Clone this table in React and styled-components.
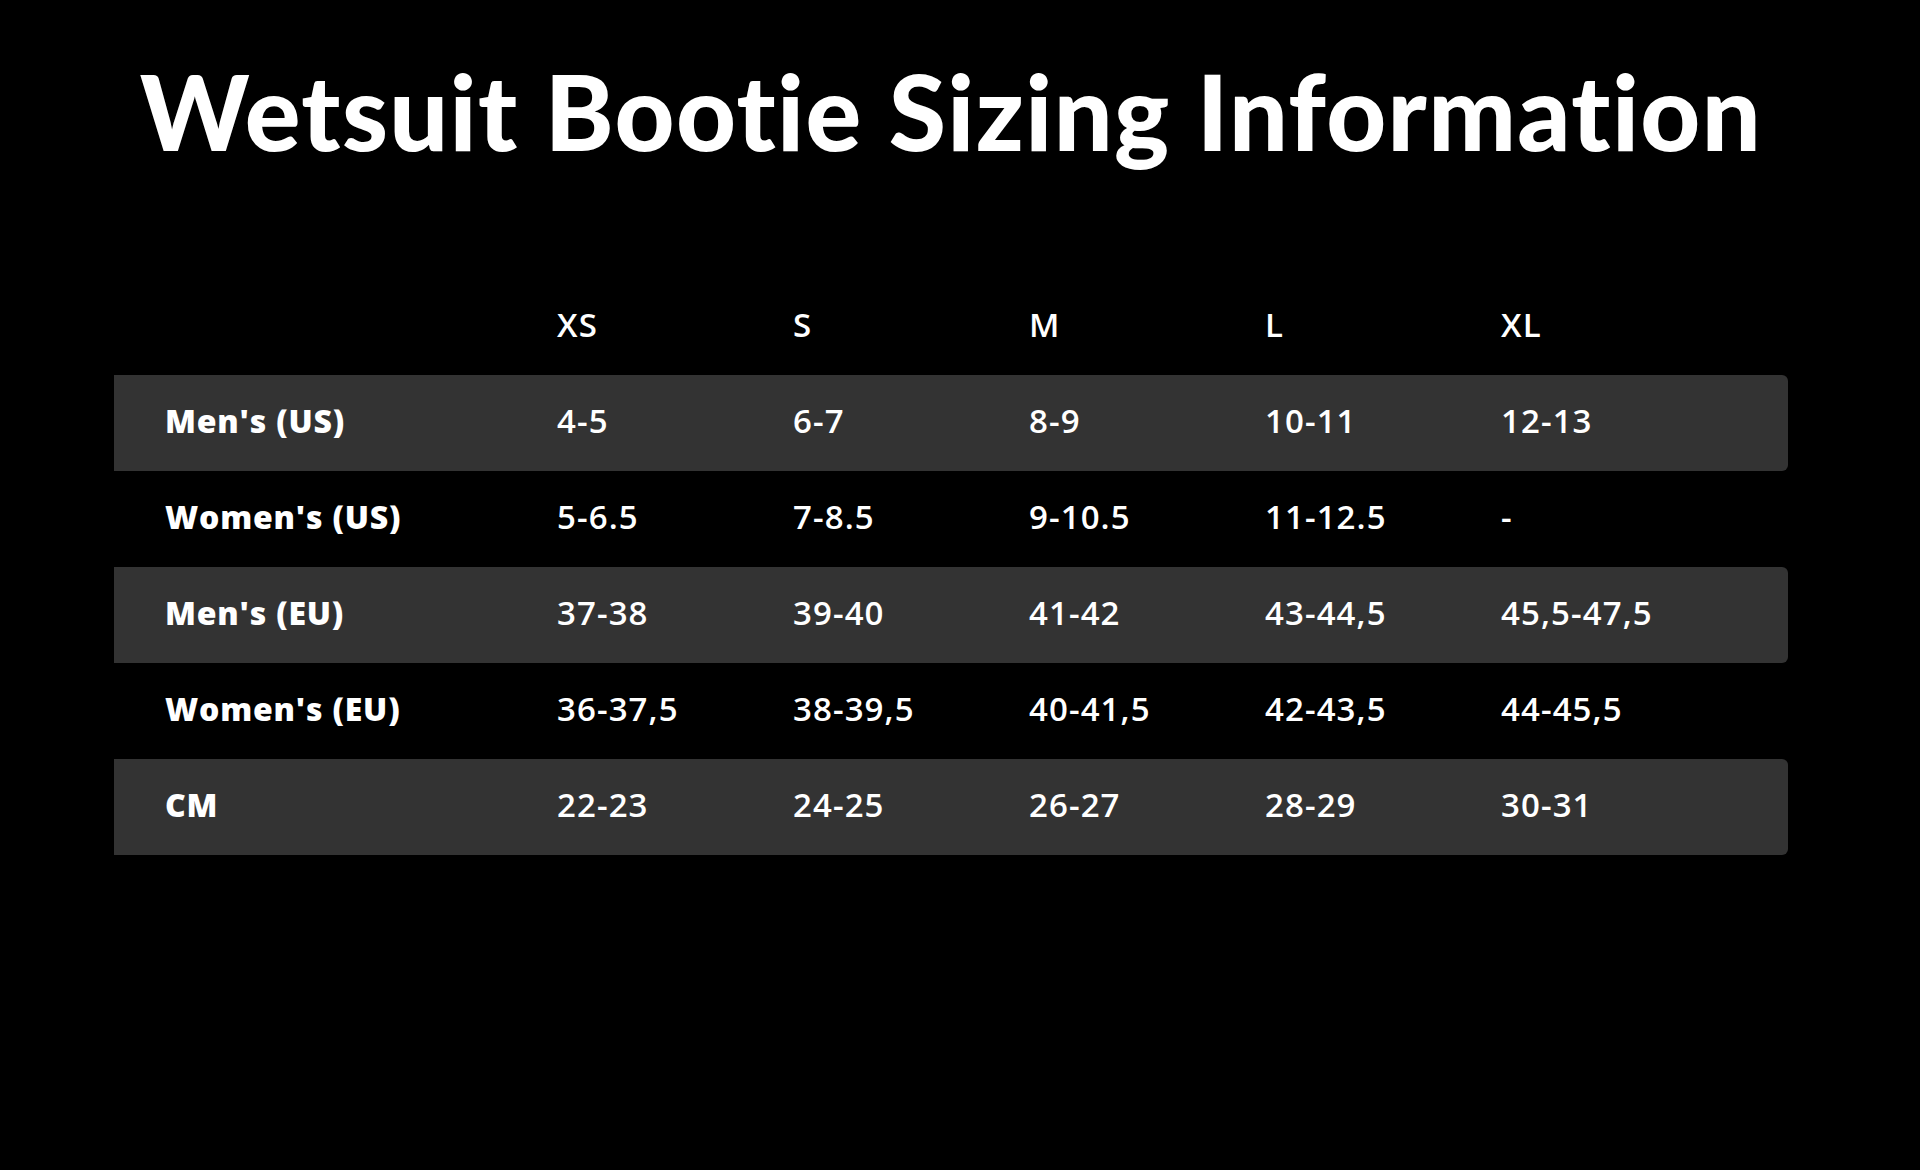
import styled, { createGlobalStyle } from 'styled-components'

const GlobalStyle = createGlobalStyle`
    html, body {
        margin: 0;
        padding: 0;
        background: #000;
    }
    body {
        font-family: "Open Sans", "Liberation Sans", sans-serif;
        color: #fff;
    }
`;

const Page = styled.div`
    width: 1920px;
    height: 1170px;
    background: #000;
    padding-left: 114px;
    box-sizing: border-box;
`;

const Content = styled.div`
    width: 1674px;
    display: flex;
    flex-direction: column;
`;

const Title = styled.h1`
    margin: 0;
    padding-top: 46px;
    text-align: center;
    font-family: Lato, "Open Sans", sans-serif;
    font-weight: 900;
    font-size: 104px;
    line-height: 130px;
    letter-spacing: 1.4px;
    font-variant-ligatures: none;
    font-feature-settings: "liga" 0, "clig" 0;
`;

const Table = styled.div`
    margin-top: 103px;
    display: flex;
    flex-direction: column;
`;

const Row = styled.div`
    display: grid;
    grid-template-columns: 392px repeat(5, 236px);
    align-items: center;
    height: 96px;
    padding-left: 51px;
    padding-bottom: 5px;
    box-sizing: border-box;
    background: ${p => (p.shaded ? '#333333' : 'transparent')};
    border-radius: 0 6px 6px 0;
`;

const Label = styled.div`
    font-family: "Open Sans", sans-serif;
    font-weight: 800;
    font-size: 32px;
    letter-spacing: 0.8px;
`;

const Cell = styled.div`
    font-family: "Open Sans", sans-serif;
    font-weight: 600;
    font-size: 33px;
    letter-spacing: 1.1px;
`;

const sizes = ['XS', 'S', 'M', 'L', 'XL']

const rows = [
    { label: "Men's (US)", values: ['4-5', '6-7', '8-9', '10-11', '12-13'] },
    { label: "Women's (US)", values: ['5-6.5', '7-8.5', '9-10.5', '11-12.5', '-'] },
    { label: "Men's (EU)", values: ['37-38', '39-40', '41-42', '43-44,5', '45,5-47,5'] },
    { label: "Women's (EU)", values: ['36-37,5', '38-39,5', '40-41,5', '42-43,5', '44-45,5'] },
    { label: 'CM', values: ['22-23', '24-25', '26-27', '28-29', '30-31'] },
]

const App = () => {
    return (
        <Page>
            <GlobalStyle />
            <Content>
                <Title>Wetsuit Bootie Sizing Information</Title>
                <Table>
                    <Row>
                        <Label />
                        {sizes.map(s => <Cell key={s}>{s}</Cell>)}
                    </Row>
                    {rows.map((r, i) => (
                        <Row key={r.label} shaded={i % 2 === 0}>
                            <Label>{r.label}</Label>
                            {r.values.map((v, j) => <Cell key={j}>{v}</Cell>)}
                        </Row>
                    ))}
                </Table>
            </Content>
        </Page>
    )
}

export default App
